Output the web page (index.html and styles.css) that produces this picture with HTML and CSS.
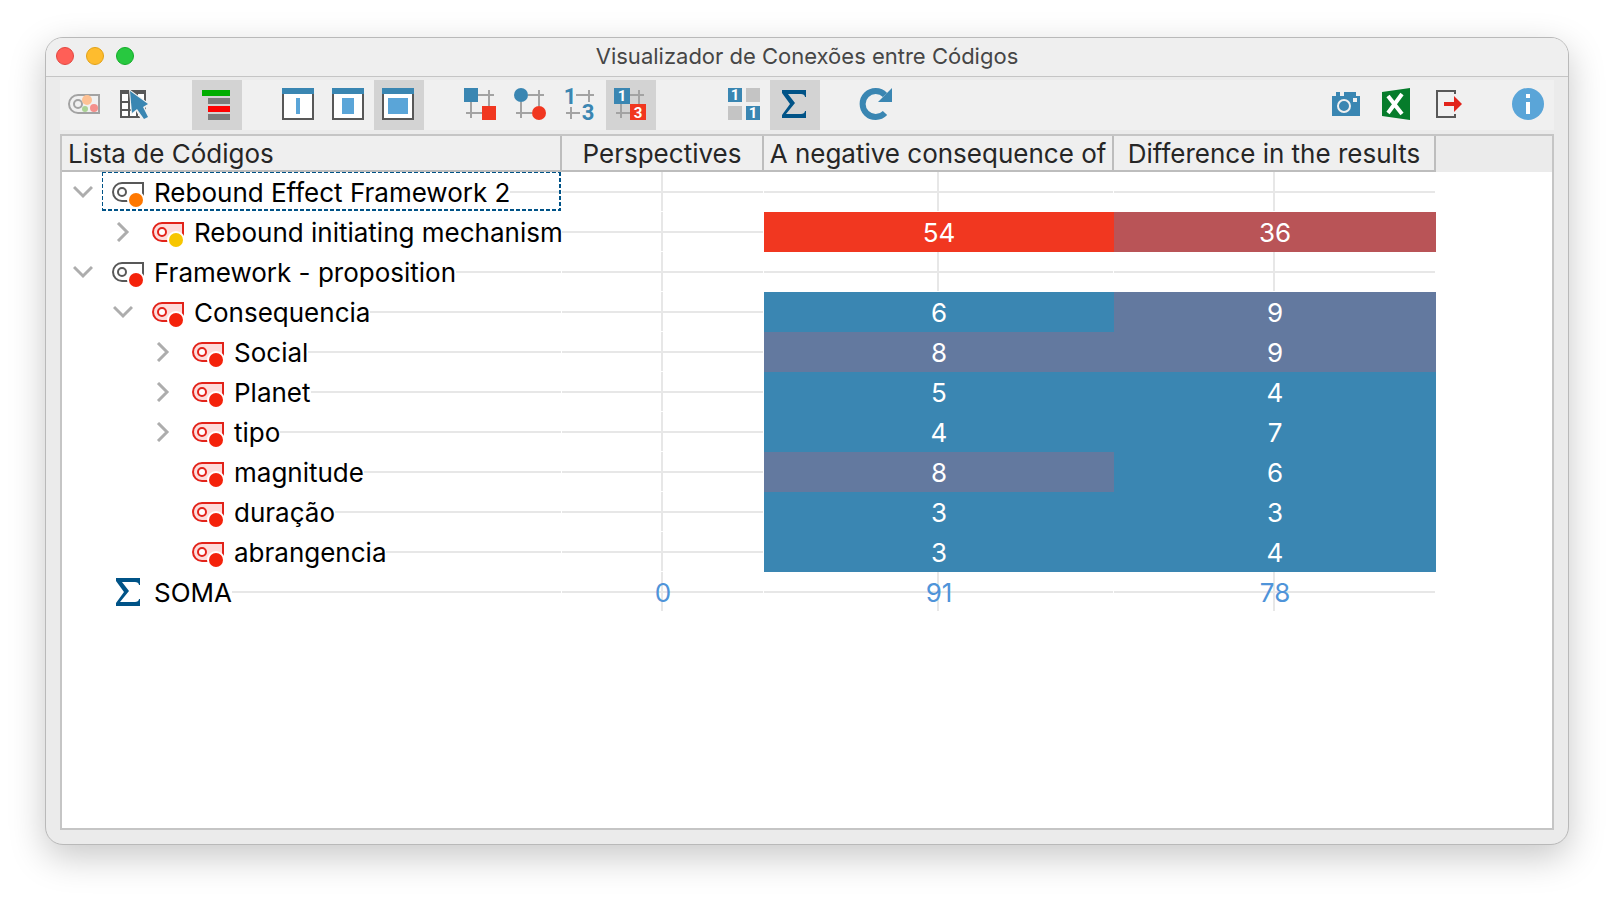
FILE: index.html
```html
<!DOCTYPE html>
<html lang="pt-BR">

<head>
    <meta charset="UTF-8">
    <meta name="viewport" content="width=device-width, initial-scale=1.0">
    <title>Visualizador de Conexões entre Códigos</title>
    <link rel="stylesheet" href="styles.css">
</head>

<body>
    <!-- shared icons -->
    <svg class="sprite" aria-hidden="true">
        <symbol id="tag" viewBox="0 0 32 32">
            <path class="tag-body" d="M31 7H10a9 9 0 0 0 0 18H31Z" stroke-width="2" />
            <circle class="tag-hole" cx="10" cy="16" r="4" stroke-width="2" />
            <circle class="tag-halo" cx="24" cy="24" r="9" />
            <circle class="tag-dot" cx="24" cy="24" r="7" />
        </symbol>
        <symbol id="down" viewBox="0 0 20 20">
            <path d="M1 5l9 9 9-9" fill="none" stroke="#adadad" stroke-width="3" />
        </symbol>
        <symbol id="right" viewBox="0 0 20 20">
            <path d="M5 1l9 9-9 9" fill="none" stroke="#adadad" stroke-width="3" />
        </symbol>
        <symbol id="sigma" viewBox="0 0 32 32">
            <path d="M4 2H28V9H27C27 7 25 6 23 6H10L17 15L8 26H23C25 26 27 25 27 23H28V30H4V27L12 16L4 5Z" fill="#005387" />
        </symbol>
    </svg>

    <main class="window">
        <header class="titlebar">
            <div class="lights">
                <button class="light red" aria-label="Fechar"></button>
                <button class="light yellow" aria-label="Minimizar"></button>
                <button class="light green" aria-label="Ampliar"></button>
            </div>
            <h1>Visualizador de Conexões entre Códigos</h1>
        </header>

        <div class="toolbar">
            <div class="group">
                <button class="tool" aria-label="Códigos ativados">
                    <svg viewBox="0 0 32 32">
                        <path d="M31 7H10a9 9 0 0 0 0 18H31Z" fill="#f0f0f0" stroke="#a3a3a3" stroke-width="2" />
                        <circle cx="10" cy="16" r="4" fill="none" stroke="#a3a3a3" stroke-width="2" />
                        <circle cx="19" cy="12" r="5" fill="#fdc194" />
                        <circle cx="17" cy="21" r="3" fill="#aad294" />
                        <circle cx="26" cy="20" r="4" fill="#f4908c" />
                    </svg>
                </button>
                <button class="tool" aria-label="Selecionar">
                    <svg viewBox="0 0 32 32">
                        <path d="M2 2H28V30H2Z" fill="#585858" />
                        <path d="M4 6H10V13H4ZM12 6H18V13H12ZM20 6H26V13H20ZM4 15H10V21H4ZM12 15H18V21H12ZM20 15H26V21H20ZM4 23H10V28H4ZM12 23H18V28H12ZM20 23H26V28H20Z" fill="#fff" />
                        <path d="M11 1L13 27L18 23L24 33H32V28L27 20L32 16Z" fill="#f0f0f0" />
                        <path d="M12 3L14 25L19 21L26 31L30 29L25 19L30 16Z" fill="#3a86b2" />
                    </svg>
                </button>
            </div>
            <div class="group">
                <button class="tool active" aria-label="Hierarquia">
                    <svg viewBox="0 0 32 32">
                        <path d="M2 2H30V8H2Z" fill="#00ad00" />
                        <path d="M8 10H30V16H8ZM8 26H30V32H8Z" fill="#7c7c7c" />
                        <path d="M8 18H30V24H8Z" fill="#f00" />
                    </svg>
                </button>
            </div>
            <div class="group">
                <button class="tool" aria-label="Colunas estreitas">
                    <svg viewBox="0 0 32 32">
                        <path d="M1 1H31V31H1Z" fill="#fff" stroke="#585858" stroke-width="2" />
                        <path d="M0 0H32V6H0Z" fill="#3a86b2" />
                        <path d="M14 10H18V26H14Z" fill="#5aa5d8" />
                    </svg>
                </button>
                <button class="tool" aria-label="Colunas médias">
                    <svg viewBox="0 0 32 32">
                        <path d="M1 1H31V31H1Z" fill="#fff" stroke="#585858" stroke-width="2" />
                        <path d="M0 0H32V6H0Z" fill="#3a86b2" />
                        <path d="M10 10H22V26H10Z" fill="#5aa5d8" />
                    </svg>
                </button>
                <button class="tool active" aria-label="Colunas largas">
                    <svg viewBox="0 0 32 32">
                        <path d="M1 1H31V31H1Z" fill="#fff" stroke="#585858" stroke-width="2" />
                        <path d="M0 0H32V6H0Z" fill="#3a86b2" />
                        <path d="M6 10H26V26H6Z" fill="#5aa5d8" />
                    </svg>
                </button>
            </div>
            <div class="group">
                <button class="tool" aria-label="Quadrados">
                    <svg viewBox="0 0 32 32">
                        <path d="M14 7H30M2 25H18M7 14V30M25 2V18" stroke="#a3a3a3" stroke-width="2" />
                        <path d="M0 0H14V14H0Z" fill="#3a86b2" />
                        <path d="M18 18H32V32H18Z" fill="#f13720" />
                    </svg>
                </button>
                <button class="tool" aria-label="Círculos">
                    <svg viewBox="0 0 32 32">
                        <path d="M14 7H30M2 25H18M7 14V30M25 2V18" stroke="#a3a3a3" stroke-width="2" />
                        <circle cx="7" cy="7" r="7" fill="#3a86b2" />
                        <circle cx="25" cy="25" r="7" fill="#f13720" />
                    </svg>
                </button>
                <button class="tool" aria-label="Valores">
                    <svg viewBox="0 0 32 32">
                        <path d="M12 7H30M25 2V14M2 25H16M7 19V31" stroke="#a3a3a3" stroke-width="2" />
                        <text class="digit blue" x="6" y="16">1</text>
                        <text class="digit blue" x="24" y="32">3</text>
                    </svg>
                </button>
                <button class="tool active" aria-label="Valores com cores">
                    <svg viewBox="0 0 32 32">
                        <path d="M16 7H30M2 25H16M7 16V30M25 2V16" stroke="#a3a3a3" stroke-width="2" />
                        <path d="M0 0H16V16H0Z" fill="#3a86b2" />
                        <path d="M16 16H32V32H16Z" fill="#f13720" />
                        <text class="digit small" x="8" y="13">1</text>
                        <text class="digit small" x="24" y="30">3</text>
                    </svg>
                </button>
            </div>
            <div class="group wide">
                <button class="tool" aria-label="Binarizar">
                    <svg viewBox="0 0 32 32">
                        <path d="M18 0H32V14H18ZM0 18H14V32H0Z" fill="#c4c4c4" />
                        <path d="M0 0H14V14H0ZM18 18H32V32H18Z" fill="#3a86b2" />
                        <text class="digit small" x="7" y="12">1</text>
                        <text class="digit small" x="25" y="30">1</text>
                    </svg>
                </button>
                <button class="tool active" aria-label="Soma">
                    <svg><use href="#sigma" /></svg>
                </button>
            </div>
            <div class="group">
                <button class="tool" aria-label="Atualizar">
                    <svg viewBox="0 0 32 32">
                        <path d="M25 25A13 13 0 1 1 25 7" fill="none" stroke="#3a86b2" stroke-width="6" />
                        <path d="M32 0V14H18Z" fill="#3a86b2" />
                    </svg>
                </button>
            </div>
            <div class="group end">
                <button class="tool" aria-label="Captura de tela">
                    <svg viewBox="0 0 32 32">
                        <path d="M2 8H6V4H10V8H14V4H26V8H30V28H2Z" fill="#3a86b2" />
                        <circle cx="14" cy="18" r="6" fill="none" stroke="#f0f0f0" stroke-width="2" />
                        <path d="M23 10H27V14H23Z" fill="#f0f0f0" />
                    </svg>
                </button>
                <button class="tool" aria-label="Exportar para Excel">
                    <svg viewBox="0 0 32 32">
                        <path d="M2 4L30 0V32L2 28Z" fill="#067c2b" />
                        <path d="M8 8L22 26M22 6L8 25" stroke="#fff" stroke-width="4" />
                    </svg>
                </button>
                <button class="tool" aria-label="Exportar">
                    <svg viewBox="0 0 32 32">
                        <path d="M25 6V3H7V29H25V26" fill="none" stroke="#585858" stroke-width="2" />
                        <path d="M14 14H24V8L32 16L24 24V18H14Z" fill="#e2231a" />
                    </svg>
                </button>
            </div>
            <div class="group">
                <button class="tool" aria-label="Informações">
                    <svg viewBox="0 0 32 32">
                        <circle cx="16" cy="16" r="16" fill="#5aa5d8" />
                        <path d="M14 6H18V10H14ZM14 14H18V26H14Z" fill="#fff" />
                    </svg>
                </button>
            </div>
        </div>

        <div class="grid">
            <table>
                <colgroup>
                    <col class="col-codes">
                    <col class="col-perspectives">
                    <col class="col-negative">
                    <col class="col-difference">
                    <col>
                </colgroup>
                <thead>
                    <tr>
                        <th scope="col" class="first">Lista de Códigos</th>
                        <th scope="col">Perspectives</th>
                        <th scope="col">A negative consequence of</th>
                        <th scope="col">Difference in the results</th>
                        <td class="rest"></td>
                    </tr>
                </thead>
                <tbody>
                    <tr>
                        <th scope="row"><div class="node"><button class="toggle" aria-label="Recolher"><svg><use href="#down" /></svg></button><span class="label focus"><svg class="tag root orange"><use href="#tag" /></svg><span class="name">Rebound Effect Framework 2</span></span></div></th>
                        <td></td>
                        <td></td>
                        <td></td>
                    </tr>
                    <tr>
                        <th scope="row"><div class="node level-1"><button class="toggle" aria-label="Expandir"><svg><use href="#right" /></svg></button><span class="label"><svg class="tag yellow"><use href="#tag" /></svg><span class="name">Rebound initiating mechanisms</span></span></div></th>
                        <td></td>
                        <td class="heat-4">54</td>
                        <td class="heat-3">36</td>
                    </tr>
                    <tr>
                        <th scope="row"><div class="node"><button class="toggle" aria-label="Recolher"><svg><use href="#down" /></svg></button><span class="label"><svg class="tag root"><use href="#tag" /></svg><span class="name">Framework - proposition</span></span></div></th>
                        <td></td>
                        <td></td>
                        <td></td>
                    </tr>
                    <tr>
                        <th scope="row"><div class="node level-1"><button class="toggle" aria-label="Recolher"><svg><use href="#down" /></svg></button><span class="label"><svg class="tag"><use href="#tag" /></svg><span class="name">Consequencia</span></span></div></th>
                        <td></td>
                        <td class="heat-1">6</td>
                        <td class="heat-2">9</td>
                    </tr>
                    <tr>
                        <th scope="row"><div class="node level-2"><button class="toggle" aria-label="Expandir"><svg><use href="#right" /></svg></button><span class="label"><svg class="tag"><use href="#tag" /></svg><span class="name">Social</span></span></div></th>
                        <td></td>
                        <td class="heat-2">8</td>
                        <td class="heat-2">9</td>
                    </tr>
                    <tr>
                        <th scope="row"><div class="node level-2"><button class="toggle" aria-label="Expandir"><svg><use href="#right" /></svg></button><span class="label"><svg class="tag"><use href="#tag" /></svg><span class="name">Planet</span></span></div></th>
                        <td></td>
                        <td class="heat-1">5</td>
                        <td class="heat-1">4</td>
                    </tr>
                    <tr>
                        <th scope="row"><div class="node level-2"><button class="toggle" aria-label="Expandir"><svg><use href="#right" /></svg></button><span class="label"><svg class="tag"><use href="#tag" /></svg><span class="name">tipo</span></span></div></th>
                        <td></td>
                        <td class="heat-1">4</td>
                        <td class="heat-1">7</td>
                    </tr>
                    <tr>
                        <th scope="row"><div class="node level-2"><span class="toggle"></span><span class="label"><svg class="tag"><use href="#tag" /></svg><span class="name">magnitude</span></span></div></th>
                        <td></td>
                        <td class="heat-2">8</td>
                        <td class="heat-1">6</td>
                    </tr>
                    <tr>
                        <th scope="row"><div class="node level-2"><span class="toggle"></span><span class="label"><svg class="tag"><use href="#tag" /></svg><span class="name">duração</span></span></div></th>
                        <td></td>
                        <td class="heat-1">3</td>
                        <td class="heat-1">3</td>
                    </tr>
                    <tr>
                        <th scope="row"><div class="node level-2"><span class="toggle"></span><span class="label"><svg class="tag"><use href="#tag" /></svg><span class="name">abrangencia</span></span></div></th>
                        <td></td>
                        <td class="heat-1">3</td>
                        <td class="heat-1">4</td>
                    </tr>
                    <tr class="sum">
                        <th scope="row"><div class="node"><span class="toggle"></span><span class="label"><svg class="tag"><use href="#sigma" /></svg><span class="name">SOMA</span></span></div></th>
                        <td>0</td>
                        <td>91</td>
                        <td>78</td>
                    </tr>
                </tbody>
            </table>
        </div>
    </main>
</body>

</html>
```
FILE: styles.css
```css
* {
    margin: 0;
    padding: 0;
    box-sizing: border-box;
}

body {
    min-height: 100vh;
    padding: 37px 45px 53px;
    display: flex;
    background: #fff;
    font-family: Inter, "Liberation Sans", sans-serif;
    font-size: 26px;
}

button {
    border: 0;
    background: none;
    font: inherit;
}

svg {
    display: block;
}

.sprite {
    position: absolute;
    width: 0;
    height: 0;
}

.window {
    flex: 1;
    min-width: 0;
    display: flex;
    flex-direction: column;
    border: 1px solid #b9b9b9;
    border-radius: 18px;
    background: #ebebeb;
    box-shadow: 0 12px 36px rgba(0, 0, 0, 0.22);
    overflow: hidden;
}

/* title bar */
.titlebar {
    height: 39px;
    padding: 0 10px 2px;
    display: grid;
    grid-template-columns: 1fr auto 1fr;
    align-items: center;
    background: #efefef;
    border-bottom: 1px solid #c5c5c5;
}

.lights {
    display: flex;
    gap: 12px;
}

.light {
    width: 18px;
    height: 18px;
    border-radius: 50%;
    border: 1px solid #e2463f;
    background: #ff5f57;
}

.light.yellow {
    border-color: #e1a116;
    background: #febc2e;
}

.light.green {
    border-color: #12ac28;
    background: #28c840;
}

h1 {
    font-size: 22px;
    font-weight: 400;
    line-height: 32px;
    color: #464646;
}

/* toolbar */
.toolbar {
    margin: 3px 14px 4px;
    display: flex;
    gap: 32px;
    background: #f0f0f0;
}

.group {
    display: flex;
}

.group.wide {
    margin-left: 32px;
}

.group.end {
    margin-left: auto;
}

.tool {
    padding: 8px 10px 10px 8px;
}

.tool.active {
    background: #d3d3d3;
}

.tool svg {
    width: 32px;
    height: 32px;
    overflow: visible;
}

.digit {
    font-family: Roboto, sans-serif;
    font-size: 22px;
    font-weight: 700;
    text-anchor: middle;
}

.digit.blue {
    fill: #3a86b2;
}

.digit.small {
    font-size: 15px;
    fill: #fff;
}

/* code table */
.grid {
    flex: 1;
    margin: 0 14px 14px;
    border: 2px solid #c5c5c5;
    background: #fff;
}

table {
    width: 100%;
    table-layout: fixed;
    border-collapse: separate;
    border-spacing: 0;
}

.col-codes {
    width: 500px;
}

.col-perspectives {
    width: 202px;
}

.col-negative {
    width: 350px;
}

.col-difference {
    width: 322px;
}

th {
    font-weight: 400;
    text-align: left;
    white-space: nowrap;
}

thead th {
    height: 36px;
    padding-top: 2px;
    border-right: 2px solid #bdbdbd;
    border-bottom: 2px solid #bdbdbd;
    background: #efefef;
    color: #262626;
    line-height: 32px;
    text-align: center;
}

thead .first {
    padding-left: 6px;
    text-align: left;
}

.rest {
    background: #ebebeb;
}

tbody th {
    overflow: hidden;
    background: linear-gradient(#e7e7e7, #e7e7e7) 0 19px / calc(100% - 1px) 2px no-repeat;
}

tbody td {
    height: 40px;
    padding-top: 2px;
    line-height: 38px;
    text-align: center;
    color: #fff;
    background:
        linear-gradient(#e7e7e7, #e7e7e7) 0 19px / calc(100% - 1px) 2px no-repeat,
        linear-gradient(#e7e7e7, #e7e7e7) calc(50% - 1px) 0 / 2px 39px no-repeat;
}

.heat-1 {
    background: #3a86b2;
}

.heat-2 {
    background: #63799f;
}

.heat-3 {
    background: #b95457;
}

.heat-4 {
    background: #f13720;
}

.sum td {
    color: #4f94d9;
}

/* tree */
.node {
    display: flex;
    height: 40px;
}

.level-1 {
    padding-left: 40px;
    background: linear-gradient(#fff, #fff) 0 0 / 40px 100% no-repeat;
}

.level-2 {
    padding-left: 80px;
    background: linear-gradient(#fff, #fff) 0 0 / 80px 100% no-repeat;
}

.toggle {
    flex: none;
    width: 40px;
    padding: 10px 9px 10px 11px;
    background: #fff;
}

.toggle svg {
    width: 20px;
    height: 20px;
}

.label {
    display: flex;
    flex: 1;
}

.name {
    height: 40px;
    padding-top: 2px;
    line-height: 38px;
    background: #fff;
}

.tag {
    flex: none;
    width: 52px;
    height: 40px;
    padding: 4px 10px;
    background: #fff;
    --dot: #f4220b;
    --line: #e2231a;
    --body: #fddcdb;
}

.tag.root {
    --line: #585858;
    --body: #fff;
}

.tag.orange {
    --dot: #ff7800;
}

.tag.yellow {
    --dot: #f7c600;
}

.tag-body {
    fill: var(--body);
    stroke: var(--line);
}

.tag-hole {
    fill: #fff;
    stroke: var(--line);
}

.tag-halo {
    fill: #fff;
}

.tag-dot {
    fill: var(--dot);
}

/* keyboard focus on the current row */
.focus {
    --dash: #005387 0 4px, transparent 4px 6px;
    position: relative;
}

.focus::after {
    content: "";
    position: absolute;
    inset: 0 1px 1px 0;
    background:
        repeating-linear-gradient(90deg, var(--dash)) 0 0 / 100% 1px no-repeat,
        repeating-linear-gradient(90deg, var(--dash)) 0 100% / 100% 2px no-repeat,
        repeating-linear-gradient(var(--dash)) 0 0 / 1px 100% no-repeat,
        repeating-linear-gradient(var(--dash)) 100% 0 / 2px 100% no-repeat;
}
```
